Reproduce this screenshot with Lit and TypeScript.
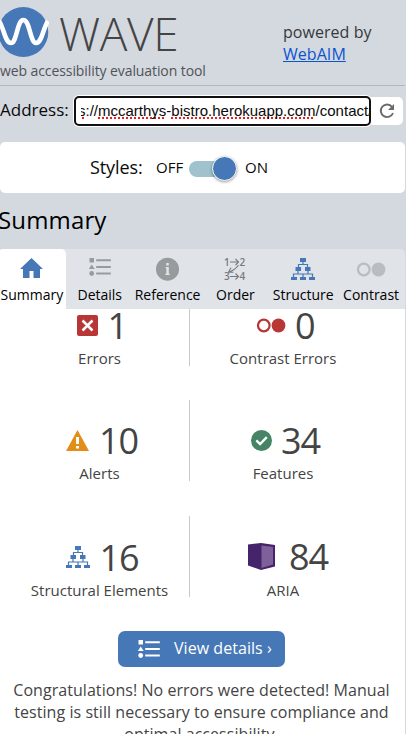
import { LitElement, html, css } from "lit";
import { customElement } from "lit/decorators.js";
import { styleMap } from "lit/directives/style-map.js";
import { classMap } from "lit/directives/class-map.js";

const homeIcon = html`<svg width="24" height="23" viewBox="0 0 24 23"><path d="M11.500 0 0 11h3V20h6.500v-7h4v7H20v-9h3z" fill="#4677b6"/></svg>`;
const listIcon = (color: string) => html`<svg width="22" height="20" viewBox="0 0 22 20"><g fill=${color}><path d="M.5 1h4.500v4.500H.500zM2.700 7.400 5.700 12H-.100z"/><circle cx="2.700" cy="16.500" r="2.400"/><path d="M7.200 2.200h14.600v2H7.200zM7.200 9h14.600v2H7.200zM7.200 15.600h14.600v2H7.200z"/></g></svg>`;
const listTabIcon = html`<svg width="22" height="24" viewBox="0 0 22 24"><g fill="#989b9e"><path d="M.5 1h4.500v4.500H.500zM2.700 7.400 5.700 12H-.100z"/><circle cx="2.700" cy="16.500" r="2.400"/><path d="M7.200 2.200h14.600v2H7.200zM7.200 9h14.600v2H7.200zM7.200 15.600h14.600v2H7.200z"/></g></svg>`;
const infoIcon = html`<svg width="24" height="24" viewBox="0 0 24 24"><circle cx="11.500" cy="12.200" r="11.500" fill="#989b9e"/><path d="M10.200 6h2.600v2.500h-2.600zM9.700 10h3.100v6.500h.8v1.600H9.500v-1.600h.9v-5h-.7z" fill="#e0e3e8"/></svg>`;
const orderIcon = html`<svg width="24" height="26" viewBox="0 0 24 26"><g fill="#777b80" font-family="Open Sans, sans-serif" font-weight="600" font-size="10"><text x="1" y="9.500">1</text><text x="16.500" y="9.500">2</text><text x="1" y="24">3</text><text x="16.500" y="24">4</text></g><g fill="none" stroke="#777b80" stroke-width="1.100"><path d="M7 6h8.500M12.500 3l3 3-3 3M7 20.500h8.500M12.500 17.500l3 3-3 3M15.500 9Q12.500 13.500 6 16.200M8 11.700L5.500 16.200H10.500"/></g></svg>`;
const treeIcon = html`<svg width="24" height="22" viewBox="0 0 24 22"><g fill="#4677b6"><path d="M9 0h6v4H9zM4.500 9H10v4H4.500zM14 9h5.500v4H14zM0 19h6v3H0zM9 19h6v3H9zM18 19h6v3h-6z"/></g><path d="M12 4v2.500M7.500 9V6.500h9V9M7 13v3M17 13v3M2.500 19v-3h19v3M12 16v3" fill="none" stroke="#4677b6" stroke-width="1.200"/></svg>`;
const ringsIcon = (color: string) => html`<svg width="29" height="15" viewBox="0 0 29 15"><circle cx="6.800" cy="7.500" r="5.800" fill="none" stroke=${color} stroke-width="2.200"/><circle cx="21.500" cy="7.500" r="6.900" fill=${color}/></svg>`;
const errorIcon = html`<svg width="21" height="21" viewBox="0 0 21 21"><rect width="21" height="21" rx="2" fill="#b93637"/><path d="M5.500 5.500l10 10M15.500 5.500l-10 10" stroke="#fff" stroke-width="2.500"/></svg>`;
const alertIcon = html`<svg width="23" height="21" viewBox="0 0 23 21"><path d="M11.500 0 23 21H0z" fill="#e28d17"/><path d="M10 7h3v7h-3zM10 16h3v2.500h-3z" fill="#fff"/></svg>`;
const featureIcon = html`<svg width="21" height="21" viewBox="0 0 21 21"><circle cx="10.500" cy="10.500" r="10.500" fill="#458566"/><path d="M5.300 10.400l3.800 3.700 6.700-7" fill="none" stroke="#fff" stroke-width="2.300"/></svg>`;
const ariaIcon = html`<svg width="27" height="27" viewBox="0 0 27 27"><path d="M0 1.500 13 0l14 2v21.500L13 27 0 22.500z" fill="#46246c"/><path d="M13.500 2.500 25 4v17.500l-11.500 3.500z" fill="#80609b"/></svg>`;

const tabs = [
  { label: "Summary", icon: homeIcon },
  { label: "Details", icon: listTabIcon },
  { label: "Reference", icon: infoIcon },
  { label: "Order", icon: orderIcon },
  { label: "Structure", icon: treeIcon },
  { label: "Contrast", icon: ringsIcon("#b9bcc0") },
];

const metrics = [
  { label: "Errors", count: 1, icon: errorIcon, lead: 67, gap: 9.5 },
  { label: "Contrast Errors", count: 0, icon: ringsIcon("#b93637"), lead: 67, gap: 9 },
  { label: "Alerts", count: 10, icon: alertIcon, lead: 56, gap: 10 },
  { label: "Features", count: 34, icon: featureIcon, lead: 61, gap: 9 },
  { label: "Structural Elements", count: 16, icon: treeIcon, lead: 56, gap: 9.5 },
  { label: "ARIA", count: 84, icon: ariaIcon, lead: 58, gap: 14 },
];

@customElement("app-root")
export class AppRoot extends LitElement {
  static styles = css`
    :host { display: block; height: 734px; overflow: hidden; background: #d4d8df; font-family: "Open Sans", sans-serif; color: #0a0a0a; white-space: nowrap; }
    * { box-sizing: border-box; }
    svg { display: block; flex: none; }
    .page { width: 405px; height: 734px; display: flex; flex-direction: column; }
    header { height: 86px; flex: none; display: flex; justify-content: space-between; border-bottom: 1px solid #b3b7bb; }
    .brand { display: flex; gap: 10px; height: 57px; padding-top: 7px; }
    .name { font-size: 46px; font-weight: 300; line-height: 53px; height: 50px; color: #444; letter-spacing: -0.3px; }
    .tagline { font-size: 14px; line-height: 28px; color: #505357; letter-spacing: -0.09px; }
    .powered { width: 122px; padding-top: 21px; font-size: 16px; line-height: 22px; color: #36393c; letter-spacing: 0.05px; }
    .powered a { display: block; color: #0b54cf; text-decoration: underline; }
    .address { display: flex; height: 56px; flex: none; padding-top: 10px; }
    .address label { width: 74px; font-size: 17px; line-height: 27px; }
    .url { width: 297px; height: 30px; background: #fff; border: 2px solid #111; border-radius: 5px; box-shadow: 0 0 0 1px #fff; padding-left: 5px; }
    .clip { overflow: hidden; height: 26px; font: 15px/26px "Liberation Sans", sans-serif; }
    .path { margin-left: -3px; }
    .typo { text-decoration: underline dotted #f21b1b 2px; text-underline-offset: 1px; text-decoration-skip-ink: none; }
    .reload { width: 32px; height: 28px; margin-top: 1px; background: #fff; border-radius: 0 5px 5px 0; display: grid; place-items: center; }
    .styles { height: 51px; flex: none; background: #fff; border-radius: 5px; display: flex; align-items: center; padding-left: 90px; font-size: 15px; }
    .styles b { font-weight: 400; font-size: 18px; line-height: 26px; width: 66px; padding-bottom: 2px; letter-spacing: -0.1px; }
    .off, .on-text { padding-bottom: 1px; }
    .off { width: 33px; }
    .switch { width: 48px; height: 16px; border-radius: 8px; background: #9fc2cc; display: flex; align-items: center; justify-content: flex-end; margin: 2px 8px 0 0; }
    .knob { width: 25px; height: 25px; border-radius: 50%; background: #4677b6; border: 1px solid #fff; box-shadow: 0 1px 3px #0006; }
    h1 { margin: 0 0 0 -2px; height: 56px; flex: none; font-size: 24px; font-weight: 400; line-height: 54px; letter-spacing: 0.15px; color: #000; }
    nav { display: grid; grid-template-columns: repeat(6, 1fr); margin-left: -2px; height: 60px; flex: none; background: #e0e3e8; border-radius: 5px 5px 0 0; }
    .tab { display: flex; flex-direction: column; align-items: center; font-size: 14px; color: #000; border-radius: 5px 5px 0 0; }
    .tab.on { background: #fff; }
    .glyph { height: 36px; padding-top: 4px; display: grid; place-items: center; }
    .tab span { line-height: 20px; }
    main { flex: 1; min-height: 0; overflow: hidden; background: #fff; display: flex; flex-direction: column; }
    .grid { margin: -24px 0 0 10px; display: grid; grid-template-columns: 180px 186px; grid-template-rows: 81px 81px 82px; row-gap: 34px; flex: none; }
    .metric { height: 81px; color: #444; border-right: 1px solid #c8c8c8; }
    .metric:nth-child(even) { border-right: 0; }
    .metric:nth-child(n + 5) { margin-top: 1px; }
    .value { display: flex; align-items: center; height: 62px; padding-top: 19px; font-size: 36px; line-height: 42px; letter-spacing: -1.200px; }
    .label { text-align: center; font-size: 15px; line-height: 22px; }
    .metric:nth-child(5) .value span { padding-top: 2px; }
    .metric:nth-child(n + 5) .label { padding-top: 1px; }
    .details { margin: 34px 0 0 118px; width: 167px; height: 36px; flex: none; border-radius: 7px; background: #4677b6; color: #fff; display: flex; align-items: center; padding-left: 20px; gap: 14px; font-size: 16px; letter-spacing: 0.05px; }
    .details span { padding-bottom: 2px; }
    p { margin: 12px 0 0; padding-right: 2px; text-align: center; font-size: 16px; line-height: 22px; color: #444; letter-spacing: 0.05px; }
  `;

  render() {
    return html`<div class="page">
      <header>
        <div>
          <div class="brand">
            <svg width="49" height="50" viewBox="0 0 49 50"><circle cx="23.300" cy="25" r="25" fill="#4677b6"/><path d="M-1 14C4 21 5 36 11 36C17 36 17 13 23.300 13C30 13 30 36 36 36C42 36 43 21 48 14" fill="none" stroke="#fff" stroke-width="4.600"/></svg>
            <div class="name">WAVE</div>
          </div>
          <div class="tagline">web accessibility evaluation tool</div>
        </div>
        <div class="powered">powered by<a>WebAIM</a></div>
      </header>
      <div class="address">
        <label>Address:</label>
        <div class="url"><div class="clip"><span class="path"><span class="typo">s</span>://<span class="typo">mccarthys</span>-<span class="typo">bistro.herokuapp.com</span>/contact/</span></div></div>
        <div class="reload"><svg width="16" height="16" viewBox="0 0 16 16"><path d="M13 3.800A6.300 6.300 0 1 0 14 10" fill="none" stroke="#6b6b6b" stroke-width="1.900"/><path d="M15 1v6H9z" fill="#6b6b6b"/></svg></div>
      </div>
      <section class="styles"><b>Styles:</b><span class="off">OFF</span><span class="switch"><span class="knob"></span></span><span class="on-text">ON</span></section>
      <h1>Summary</h1>
      <nav>${tabs.map((t, i) => html`<div class=${classMap({ tab: true, on: i === 0 })}><div class="glyph">${t.icon}</div><span>${t.label}</span></div>`)}</nav>
      <main>
        <div class="grid">${metrics.map((m) => html`<div class="metric"><div class="value" style=${styleMap({ paddingLeft: `${m.lead}px`, gap: `${m.gap}px` })}>${m.icon}<span>${m.count}</span></div><div class="label">${m.label}</div></div>`)}</div>
        <div class="details">${listIcon("#fff")}<span>View details ›</span></div>
        <p>Congratulations! No errors were detected! Manual<br>testing is still necessary to ensure compliance and<br>optimal accessibility.</p>
      </main>
    </div>`;
  }
}
